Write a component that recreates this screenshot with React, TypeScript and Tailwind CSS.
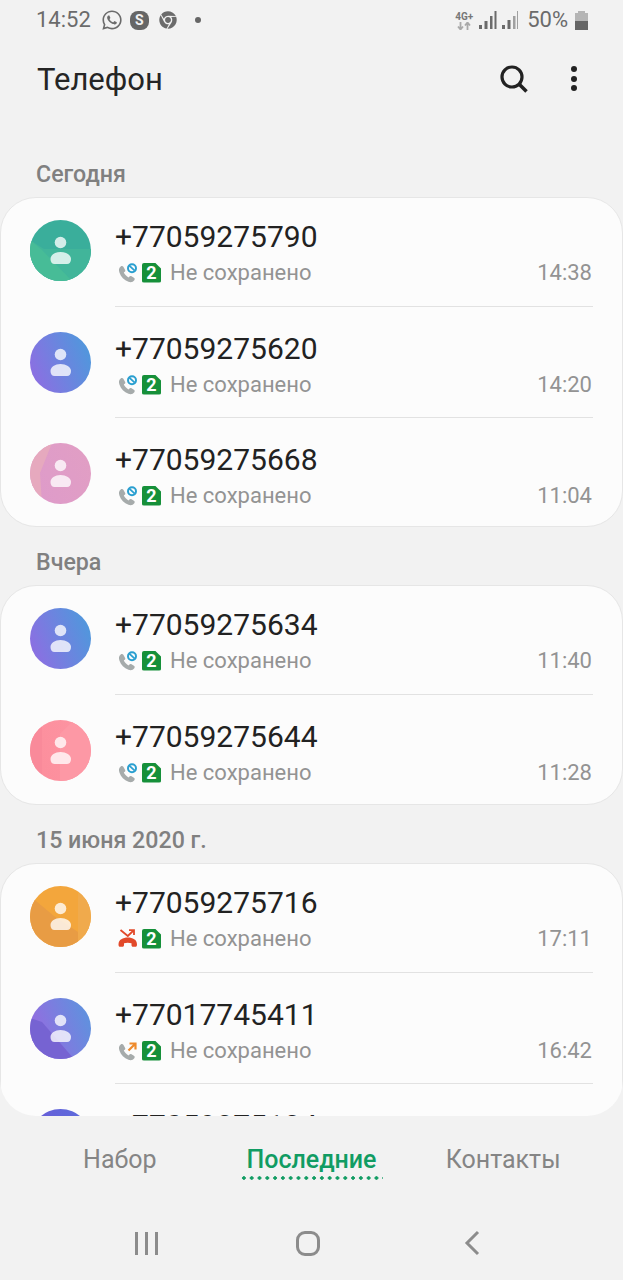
import type { ReactNode } from 'react'
import { FaWhatsapp, FaChrome } from 'react-icons/fa'

type CallKind = 'blocked' | 'missed' | 'outgoing'

type AvatarName = 'teal' | 'blue' | 'pink' | 'rose' | 'orange' | 'violet' | 'indigo'

type Call = {
    number: string
    time?: string
    kind: CallKind
    avatar: AvatarName
}

// gradient runs from lower left to upper right, facets are the faint folds on top of it
const avatars: Record<AvatarName, { from: string; to: string; facets: ReactNode }> = {
    teal: {
        from: '#3aae9b',
        to: '#3aae9b',
        facets: (
            <>
                <polygon points="0,20 14,29 61,29 61,61 0,61" fill="#41b59a" />
                <polygon points="0,20 12,30 42,61 0,61" fill="#47bc97" />
            </>
        ),
    },
    blue: { from: '#8d6ee2', to: '#4f98dc', facets: null },
    pink: {
        from: '#de9bca',
        to: '#e19ec4',
        facets: <polygon points="0,0 22,0 10,30 12,61 0,61" fill="#e6a9be" />,
    },
    rose: {
        from: '#fc8e9c',
        to: '#fd94a2',
        facets: (
            <>
                <polygon points="0,0 12,0 12,61 0,61" fill="#f98a9a" />
                <polygon points="44,0 61,0 61,61 30,61 30,14" fill="#fd98a5" />
            </>
        ),
    },
    orange: {
        from: '#f3a63c',
        to: '#f3a63c',
        facets: (
            <>
                <polygon points="0,10 24,30 48,46 48,61 0,61" fill="#e89c44" />
                <polygon points="48,0 61,0 61,61 48,61" fill="#f0aa4c" />
            </>
        ),
    },
    violet: {
        from: '#9a68e0',
        to: '#5e92de',
        facets: <polygon points="0,20 12,24 44,61 0,61" fill="#7663d2" />,
    },
    indigo: { from: '#6c58d6', to: '#5c6cdc', facets: null },
}

const groups: { title: string; calls: Call[] }[] = [
    {
        title: 'Сегодня',
        calls: [
            { number: '+77059275790', time: '14:38', kind: 'blocked', avatar: 'teal' },
            { number: '+77059275620', time: '14:20', kind: 'blocked', avatar: 'blue' },
            { number: '+77059275668', time: '11:04', kind: 'blocked', avatar: 'pink' },
        ],
    },
    {
        title: 'Вчера',
        calls: [
            { number: '+77059275634', time: '11:40', kind: 'blocked', avatar: 'blue' },
            { number: '+77059275644', time: '11:28', kind: 'blocked', avatar: 'rose' },
        ],
    },
    {
        title: '15 июня 2020 г.',
        calls: [
            { number: '+77059275716', time: '17:11', kind: 'missed', avatar: 'orange' },
            { number: '+77017745411', time: '16:42', kind: 'outgoing', avatar: 'violet' },
            // only the top of this row shows above the tabs
            { number: '+77059275124', kind: 'blocked', avatar: 'indigo' },
        ],
    },
]

function Avatar({ name }: { name: AvatarName }) {
    const c = avatars[name]
    const id = `avatar-${name}`
    return (
        <svg width="61" height="61" viewBox="0 0 61 61" className="shrink-0">
            <defs>
                <linearGradient id={id} x1="0" y1="0.7" x2="1" y2="0.3">
                    <stop offset="0" stopColor={c.from} />
                    <stop offset="1" stopColor={c.to} />
                </linearGradient>
                <clipPath id={`${id}-clip`}>
                    <circle cx="30.5" cy="30.5" r="30.5" />
                </clipPath>
            </defs>
            <g clipPath={`url(#${id}-clip)`}>
                <rect width="61" height="61" fill={`url(#${id})`} />
                {c.facets}
            </g>
            <circle cx="30.5" cy="22.5" r="5.800" fill="#fff" fillOpacity="0.78" />
            <path
                d="M20.500 39C20.500 35 25 32 30.500 32S41 35 41 39C41 42 39.500 44 37 44H24.500C22 44 20.500 42 20.500 39Z"
                fill="#fff"
                fillOpacity="0.78"
            />
        </svg>
    )
}

function CallIcon({ kind }: { kind: CallKind }) {
    if (kind === 'missed') {
        return (
            <svg width="20" height="20" viewBox="0 0 20 20" className="shrink-0">
                <path d="M0.500 15.500C0.500 10.500 5 8.500 9.800 8.500S19 10.500 19 15.500C19 17 18.500 17.800 17.200 17.800H15.200C14 17.800 13.500 17 13.500 16V14.300C11.500 13.600 8 13.600 6 14.300V16C6 17 5.500 17.800 4.300 17.800H2.300C1 17.800 0.500 17 0.500 15.500Z" fill="#e2492a" />
                <path d="M2.500 1 9.800 7 15.500 1.500M11 1.200H16V6" fill="none" stroke="#e2492a" strokeWidth="1.800" />
            </svg>
        )
    }
    return (
        <svg width="20" height="20" viewBox="0 0 20 20" className="shrink-0">
            <path d="M2.700 3.500C0.800 5 0.500 7 1.500 9.800C3 14 6 17 10.500 18.800C13 19.700 15 19 16.300 17.300C17 16.300 16.800 15.400 15.900 14.800L13.500 13.300C12.700 12.800 12 12.900 11.400 13.600L10.700 14.400C8.500 13.300 6.800 11.600 5.800 9.500L6.700 8.800C7.400 8.200 7.500 7.500 7 6.700L5.500 3.900C4.900 2.900 3.600 2.800 2.700 3.500Z" fill="#a6abab" />
            {kind === 'blocked' ? (
                <g>
                    <circle cx="14" cy="5.200" r="5.800" fill="#fcfcfc" />
                    <circle cx="14" cy="5.200" r="4" fill="none" stroke="#2a9fd0" strokeWidth="2" />
                    <line x1="11.300" y1="2.700" x2="16.700" y2="7.700" stroke="#2a9fd0" strokeWidth="1.800" />
                </g>
            ) : (
                <path d="M10.500 9.500 16.500 3.500M11.500 2.500H17.500V8.500" fill="none" stroke="#ee8a2c" strokeWidth="2.200" />
            )}
        </svg>
    )
}

function SimBadge() {
    return (
        <div className="flex h-[20px] w-[19px] shrink-0 items-center justify-center rounded-[2px] bg-[#16903a] text-[18px] font-bold leading-none text-white [clip-path:polygon(0_0,68%_0,100%_30%,100%_100%,0_100%)]">
            2
        </div>
    )
}

function CallRow({ call, height, top }: { call: Call; height: string; top: string }) {
    return (
        <div className={`flex items-start pl-[29px] pr-[30px] ${height} ${top}`}>
            <Avatar name={call.avatar} />
            <div className="ml-[24px] min-w-0 flex-1">
                <div className="-mt-[1px] h-[36px] text-[30px] leading-[36px] text-[#222222]">{call.number}</div>
                {call.time && (
                    <div className="mt-[3.500px] flex h-[28px] items-center">
                        <div className="ml-[3px] flex w-[24px] shrink-0">
                            <CallIcon kind={call.kind} />
                        </div>
                        <SimBadge />
                        <span className="ml-[9px] flex-1 text-[22px] leading-[28px] text-[#939393]">Не сохранено</span>
                        <span className="text-[22px] leading-[28px] text-[#939393]">{call.time}</span>
                    </div>
                )}
            </div>
        </div>
    )
}

function CallGroup({ title, calls }: { title: string; calls: Call[] }) {
    return (
        <section>
            <h2 className="flex h-[58px] items-center pl-[36px] pt-[12px] text-[23.2px] font-medium text-[#808080]">{title}</h2>
            <div className="rounded-[36px] border border-[#e6e6e6] bg-[#fcfcfc]">
                {calls.map((call, i) => {
                    const last = i === calls.length - 1
                    return (
                        <div key={call.number}>
                            {i > 0 && <div className="ml-[114px] mr-[29px] h-px bg-[#e2e2e2]" />}
                            <CallRow
                                call={call}
                                top={i === 0 ? 'pt-[22px]' : 'pt-[25px]'}
                                height={i === 0 ? 'h-[108px]' : last && calls.length === 3 ? 'h-[108px]' : last ? 'h-[109px]' : 'h-[110px]'}
                            />
                        </div>
                    )
                })}
            </div>
        </section>
    )
}

function StatusBar() {
    return (
        <div className="flex h-[40px] items-center pl-[36px] pr-[35px] text-[#6b6b6b]">
            <span className="text-[22px] leading-none">14:52</span>
            <FaWhatsapp className="ml-[10px] text-[22px]" />
            <div className="ml-[7px] flex h-[19px] w-[19px] items-center justify-center rounded-[8px] bg-[#666666] text-[14px] font-bold leading-none text-[#f2f2f2]">S</div>
            <FaChrome className="ml-[10px] text-[18px]" />
            <div className="ml-[18px] h-[6px] w-[6px] rounded-full bg-[#666666]" />
            <div className="flex-1" />
            <div className="flex w-[20px] flex-col items-center text-[#777777]">
                <span className="text-[10px] font-bold leading-[11px]">4G+</span>
                <svg width="14" height="8" viewBox="0 0 14 8">
                    <path d="M3.500 0V7M1 4.500 3.500 7.500 6 4.500M10.500 8V1M8 3.500 10.500 0.500 13 3.500" fill="none" stroke="#aaaaaa" strokeWidth="1.800" />
                </svg>
            </div>
            <svg width="40" height="18" viewBox="0 0 40 18" className="ml-[4px]">
                <g fill="#6b6b6b">
                    <rect x="1" y="14" width="3" height="4" />
                    <rect x="6.500" y="10" width="3" height="8" />
                    <rect x="12" y="5" width="2.500" height="13" />
                    <rect x="16.500" y="0" width="2" height="18" />
                    <rect x="24" y="14" width="3" height="4" />
                    <rect x="29.500" y="9" width="3" height="9" />
                    <rect x="35" y="5" width="2.500" height="13" fill="#a0a0a0" />
                    <rect x="39" y="0" width="1" height="18" fill="#a0a0a0" />
                </g>
            </svg>
            <span className="ml-[9px] text-[22px] leading-none">50%</span>
            <div className="ml-[7px] flex h-[19px] w-[13px] flex-col">
                <div className="mx-auto h-[2px] w-[7px] bg-[#b5b5b5]" />
                <div className="h-[8px] bg-[#b5b5b5]" />
                <div className="h-[9px] bg-[#666666]" />
            </div>
        </div>
    )
}

function BottomTabs() {
    return (
        <div className="grid h-[88px] grid-cols-3 px-[24px]">
            <div className="flex justify-center pt-[28px] text-[25px] leading-[32px] text-[#858585]">Набор</div>
            <div className="flex justify-center pt-[28px]">
                <div className="relative text-[25px] font-medium leading-[32px] text-[#119c63]">
                    Последние
                    <div className="absolute -left-[6px] -right-[7px] top-[32px] h-[4px] bg-[radial-gradient(circle,#119c63_1.500px,transparent_2px)] bg-[length:7.800px_4px]" />
                </div>
            </div>
            <div className="flex justify-center pt-[28px] text-[25px] leading-[32px] text-[#858585]">Контакты</div>
        </div>
    )
}

function NavBar() {
    return (
        <div className="grid grid-cols-3 items-center px-[24px] pt-[26px]">
            <div className="flex justify-center gap-[7px]">
                <div className="ml-[54px] h-[23px] w-[3px] bg-[#8c8c8c]" />
                <div className="h-[23px] w-[3px] bg-[#8c8c8c]" />
                <div className="h-[23px] w-[3px] bg-[#8c8c8c]" />
            </div>
            <div className="flex justify-center">
                <div className="ml-[-6px] h-[25px] w-[24px] rounded-[9px] border-[3px] border-[#8c8c8c]" />
            </div>
            <div className="flex justify-center">
                <svg width="18" height="26" viewBox="0 0 18 26" className="ml-[-63px]">
                    <path d="M15 2 4 13 15 24" fill="none" stroke="#8c8c8c" strokeWidth="3" />
                </svg>
            </div>
        </div>
    )
}

export default function App() {
    return (
        <div className="flex h-[1280px] w-[623px] flex-col overflow-hidden bg-[#f2f2f2] font-['Roboto',sans-serif]">
            <StatusBar />
            <header className="flex h-[79px] items-center pl-[37px] pr-[46px]">
                <h1 className="flex-1 text-[31px] font-normal leading-none text-[#252525]">Телефон</h1>
                <div className="mb-[2px] flex items-center">
                    <svg width="30" height="30" viewBox="0 0 30 30">
                        <circle cx="13" cy="13" r="10" fill="none" stroke="#222222" strokeWidth="3.200" />
                        <path d="M20.500 20.500 27.500 27.500" stroke="#222222" strokeWidth="3.500" />
                    </svg>
                    <div className="ml-[42px] flex flex-col gap-[3.500px]">
                        <div className="h-[6px] w-[6px] rounded-full bg-[#222222]" />
                        <div className="h-[6px] w-[6px] rounded-full bg-[#222222]" />
                        <div className="h-[6px] w-[6px] rounded-full bg-[#222222]" />
                    </div>
                </div>
            </header>
            <main className="mt-[20px] h-[977px] shrink-0 overflow-hidden rounded-b-[36px]">
                {groups.map((group) => (
                    <CallGroup key={group.title} title={group.title} calls={group.calls} />
                ))}
            </main>
            <BottomTabs />
            <NavBar />
        </div>
    )
}
